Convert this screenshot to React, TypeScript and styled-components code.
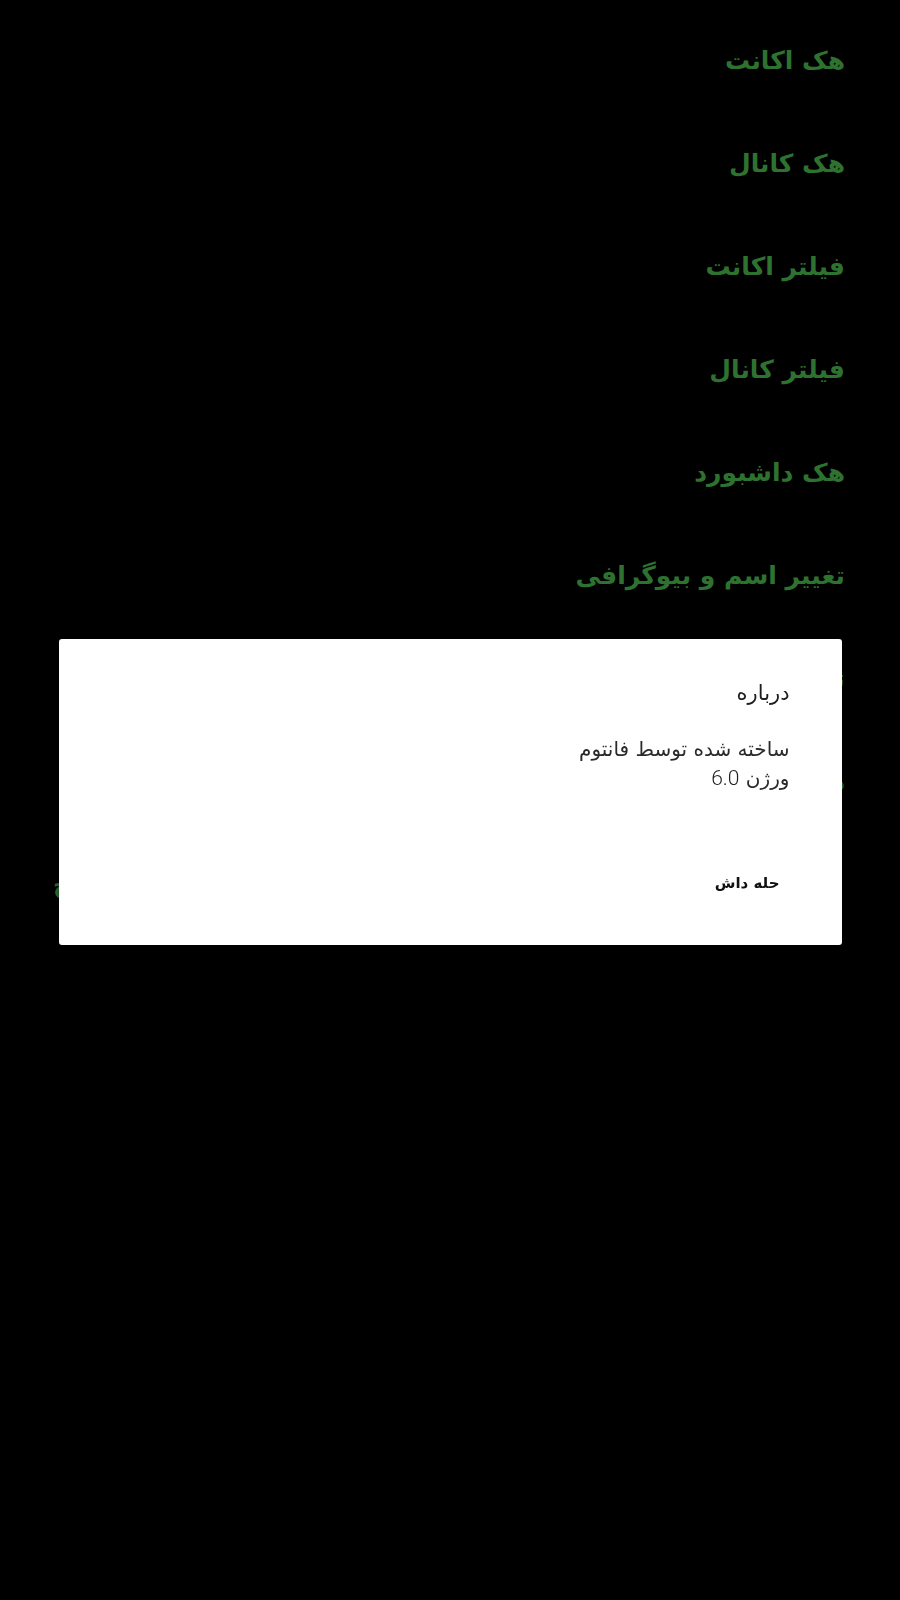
import React from "react";
import styled, { createGlobalStyle } from "styled-components";

const Global = createGlobalStyle`
  html, body {
    margin: 0;
    padding: 0;
    background: #000;
  }
  body {
    font-family: "DejaVu Sans", sans-serif;
  }
`;

const Page = styled.div`
  direction: rtl;
  min-height: 1600px;
  background: #000;
  padding: 43px 55px 0 0;
  box-sizing: border-box;
`;

const Menu = styled.div`
  display: flex;
  flex-direction: column;
  gap: 67px;
`;

const Item = styled.div<{ $left?: boolean }>`
  color: #2e7230;
  font-family: "DejaVu Sans", sans-serif;
  font-weight: bold;
  font-size: 25px;
  line-height: 36px;
  letter-spacing: 0.5px;
  text-align: ${(p) => (p.$left ? "left" : "right")};
  padding-left: ${(p) => (p.$left ? "53px" : "0")};
`;

const Overlay = styled.div`
  position: fixed;
  inset: 0;
  display: flex;
  align-items: center;
  justify-content: center;
  padding-bottom: 16px;
  box-sizing: border-box;
`;

const Dialog = styled.div`
  direction: rtl;
  width: 783px;
  height: 306px;
  box-sizing: border-box;
  background: #fff;
  border-radius: 3px;
  box-shadow: 0 2px 6px rgba(0, 0, 0, 0.5);
  padding: 40px 52px 0 52px;
  display: flex;
  flex-direction: column;
`;

const Title = styled.div`
  color: #1e1e1e;
  font-size: 21px;
  line-height: 28px;
  word-spacing: 0;
  letter-spacing: 4px;
  font-family: "DejaVu Sans", sans-serif;
`;

const Message = styled.div`
  margin-top: 28px;
  color: #2a2a2a;
  font-size: 20px;
  line-height: 29px;
  font-family: "DejaVu Sans", sans-serif;
`;

const Version = styled.span`
  font-family: Roboto, sans-serif;
  font-size: 21px;
  font-weight: 300;
  color: #1e1e1e;
`;

const Actions = styled.div`
  margin-top: auto;
  margin-bottom: 48px;
  display: flex;
  justify-content: flex-start;
  padding-right: 10px;
`;

const Button = styled.button`
  background: transparent;
  border: none;
  padding: 4px 0;
  color: #111;
  font-family: "DejaVu Sans", sans-serif;
  font-weight: bold;
  font-size: 15px;
  line-height: 20px;
  cursor: pointer;
`;

const items = [
  "هک اکانت",
  "هک کانال",
  "فیلتر اکانت",
  "فیلتر کانال",
  "هک داشبورد",
  "تغییر اسم و بیوگرافی",
  "تغییر عکس پروفایل",
  "درباره",
];

export default function App() {
  return (
    <>
      <Global />
      <Page>
        <Menu>
          {items.map((t) => (
            <Item key={t}>{t}</Item>
          ))}
          <Item $left>خروج</Item>
        </Menu>
      </Page>
      <Overlay>
        <Dialog>
          <Title>درباره</Title>
          <Message>
            ساخته شده توسط فانتوم
            <br />
            ورژن <Version>6.0</Version>
          </Message>
          <Actions>
            <Button>حله داش</Button>
          </Actions>
        </Dialog>
      </Overlay>
    </>
  );
}
